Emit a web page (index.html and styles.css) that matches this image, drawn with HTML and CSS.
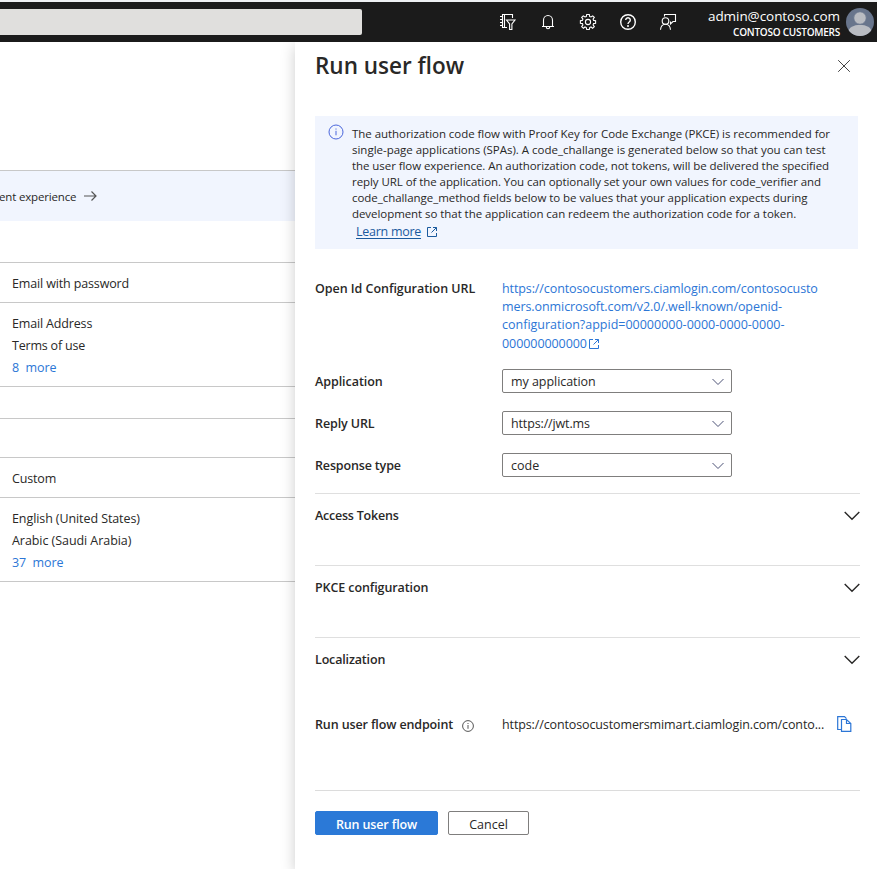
FILE: index.html
```html
<!DOCTYPE html>
<html lang="en">
<head>
<meta charset="utf-8">
<title>Run user flow</title>
<link rel="stylesheet" href="styles.css">
</head>
<body>
<header class="topbar">
  <div class="search"></div>
  <nav class="tools">
    <svg width="20" height="20" viewBox="0 0 20 20"><path d="M9 15.500H4.500V2.500H14.500V6M6.500 2.500V15.500M2 4.500H4M2 7.500H4M2 10.500H4M2 13.500H4M8.500 8H17L13.900 12V17.500H11.600V12Z"/></svg>
    <svg width="20" height="20" viewBox="0 0 20 20"><path d="M5.500 14.500V8.200A4.500 4.700 0 0 1 14.500 8.200V14.500M4 14.500H16M8.300 15A1.700 1.700 0 0 0 11.700 15"/></svg>
    <svg width="20" height="20" viewBox="0 0 20 20"><path d="M8.700 2.500H11.300L11.700 4.500L13 5L14.700 3.900L16.300 5.400L15.100 7.100L15.600 8.400L17.600 8.800V11.200L15.600 11.600L15.100 12.900L16.300 14.600L14.600 16.200L13 15L11.700 15.600L11.300 17.500H8.700L8.300 15.600L7 15L5.400 16.200L3.700 14.600L4.900 12.900L4.400 11.600L2.400 11.200V8.800L4.400 8.400L4.900 7.100L3.700 5.400L5.300 3.900L7 5L8.300 4.500Z"/><circle cx="10" cy="10" r="2.600"/></svg>
    <svg width="20" height="20" viewBox="0 0 20 20"><g class="bold"><circle cx="10" cy="10" r="7.300"/><path d="M7.700 8A2.300 2.300 0 1 1 11.200 10C10.300 10.600 10 11 10 12"/></g><circle class="dot" cx="10" cy="14" r="1"/></svg>
    <svg width="20" height="20" viewBox="0 0 20 20"><circle cx="7.500" cy="9" r="3.300"/><path d="M2.500 17.800C2.800 14.300 4.800 12.300 7.500 12.300S12.200 14.300 12.500 17.800M6.500 4.500V2.500H17.500V9.500H15L12.500 12V9.500"/></svg>
  </nav>
  <div class="account">
    <div class="mail"><span>admin@contoso.com</span></div>
    <div class="tenant"><span>CONTOSO CUSTOMERS</span></div>
  </div>
  <svg class="avatar" width="28" height="28" viewBox="0 0 28 28"><defs><clipPath id="disc"><circle cx="14" cy="14" r="14"/></clipPath></defs><g clip-path="url(#disc)"><rect width="28" height="28" fill="#68758c"/><ellipse cx="14" cy="23.500" rx="11.500" ry="6.800" fill="#b9bcc2"/><circle cx="14" cy="10" r="6.300" fill="#b9bcc2" stroke="#68758c"/></g></svg>
</header>
<main class="content">
  <section class="page">
    <div class="banner"><span class="t-banner">ent experience</span>
      <svg width="14" height="12" viewBox="0 0 14 12"><path d="M0 6H12M7.500 1.500L12 6L7.500 10.500"/></svg>
    </div>
    <div class="row spacer-a"></div>
    <div class="row single"><p><span class="t-ewp">Email with password</span></p></div>
    <div class="row list"><p><span class="t-ea">Email Address</span></p><p><span class="t-tou">Terms of use</span></p><p><a class="t-more">8&nbsp; more</a></p></div>
    <div class="row spacer-b"></div>
    <div class="row spacer-c"></div>
    <div class="row single"><p><span class="t-cus">Custom</span></p></div>
    <div class="row list"><p><span class="t-en">English (United States)</span></p><p><span class="t-ar">Arabic (Saudi Arabia)</span></p><p><a class="t-more">37&nbsp; more</a></p></div>
  </section>
  <aside class="panel">
    <div class="panel-head">
      <h1><span>Run user flow</span></h1>
      <svg class="close" width="14" height="14" viewBox="0 0 14 14"><path d="M1.200 1.200L12.800 12.800M12.800 1.200L1.200 12.800"/></svg>
    </div>
    <div class="info">
      <svg class="info-icon" width="16" height="16" viewBox="0 0 16 16"><circle cx="8" cy="8" r="7"/><path d="M8 6.800V11.300M8 4.500V5.600"/></svg>
      <div class="info-text">
        <div class="i1">The authorization code flow with Proof Key for Code Exchange (PKCE) is recommended for</div>
        <div class="i2">single-page applications (SPAs). A code_challange is generated below so that you can test</div>
        <div class="i3">the user flow experience. An authorization code, not tokens, will be delivered the specified</div>
        <div class="i4">reply URL of the application. You can optionally set your own values for code_verifier and</div>
        <div class="i5">code_challange_method fields below to be values that your application expects during</div>
        <div class="i6">development so that the application can redeem the authorization code for a token.</div>
        <div class="learn"><a>Learn more</a><svg class="ext" width="10" height="10" viewBox="0 0 10 10"><path d="M4 .5H.5V9.500H9.500V6M6 .5H9.500V4M9.500 .5L4.500 5.500"/></svg></div>
      </div>
    </div>
    <div class="field url">
      <label><span class="l1">Open Id Configuration URL</span></label>
      <div class="url-text">
        <div class="u1">https://contosocustomers.ciamlogin.com/contosocusto</div>
        <div class="u2">mers.onmicrosoft.com/v2.0/.well-known/openid-</div>
        <div class="u3">configuration?appid=00000000-0000-0000-0000-</div>
        <div class="u4"><span>000000000000</span><svg class="ext" width="10" height="10" viewBox="0 0 10 10"><path d="M4 .5H.5V9.500H9.500V6M6 .5H9.500V4M9.500 .5L4.500 5.500"/></svg></div>
      </div>
    </div>
    <div class="field"><label><span class="l2">Application</span></label><div class="select"><span class="s1">my application</span><svg width="12" height="8" viewBox="0 0 12 8"><path d="M.5 1L6 6.500L11.500 1"/></svg></div></div>
    <div class="field"><label><span class="l3">Reply URL</span></label><div class="select"><span class="s2">https://jwt.ms</span><svg width="12" height="8" viewBox="0 0 12 8"><path d="M.5 1L6 6.500L11.500 1"/></svg></div></div>
    <div class="field"><label><span class="l4">Response type</span></label><div class="select"><span class="s3">code</span><svg width="12" height="8" viewBox="0 0 12 8"><path d="M.5 1L6 6.500L11.500 1"/></svg></div></div>
    <div class="accordion">
      <div class="section"><span class="a1">Access Tokens</span><svg width="16" height="10" viewBox="0 0 16 10"><path d="M.7 1L8 8.300L15.300 1"/></svg></div>
      <div class="section"><span class="a2">PKCE configuration</span><svg width="16" height="10" viewBox="0 0 16 10"><path d="M.7 1L8 8.300L15.300 1"/></svg></div>
      <div class="section"><span class="a3">Localization</span><svg width="16" height="10" viewBox="0 0 16 10"><path d="M.7 1L8 8.300L15.300 1"/></svg></div>
    </div>
    <div class="endpoint">
      <label><span class="l5">Run user flow endpoint</span><svg class="hint" width="12" height="12" viewBox="0 0 12 12"><circle cx="6" cy="6" r="5.400"/><path d="M6 5V8.800M6 3V4"/></svg></label>
      <span class="ep">https://contosocustomersmimart.ciamlogin.com/conto...</span>
      <svg class="copy" width="15" height="16" viewBox="0 0 15 16"><path d="M4 13.500H.7V.7H7.500L9.500 2.700M4.500 3.500H9.500L13.800 7.500V15.400H4.500ZM9.500 3.500V7.500H13.800"/></svg>
    </div>
    <div class="actions">
      <button class="primary"><span>Run user flow</span></button>
      <button><span>Cancel</span></button>
    </div>
  </aside>
</main>
</body>
</html>
```
FILE: styles.css
```css
* { box-sizing: border-box; }
body {
  margin: 0;
  width: 877px;
  height: 869px;
  overflow: hidden;
  background: #fff;
  color: #292827;
  font: 12.5px/16px "Open Sans", "Noto Sans", sans-serif;
  white-space: nowrap;
}
p, h1 { margin: 0; }
svg { flex: none; fill: none; stroke: currentColor; }
a { color: #2c76d6; }

.topbar {
  height: 42px;
  border-top: 2px solid #eef0f3;
  background: #1b1b1b;
  color: #fff;
  display: flex;
  align-items: center;
}
.search { width: 362px; height: 26px; background: #e0dfdd; border-radius: 0 2px 2px 0; }
.tools { margin-left: 136px; display: flex; gap: 20px; }
.tools svg { stroke-width: 1.1; }
.tools .bold { stroke-width: 1.4; }
.tools .dot { fill: #fff; stroke: none; }
.account { margin-left: auto; margin-right: 6px; padding-top: 2px; text-align: right; }
.mail { font-size: 13.5px; line-height: 17px; letter-spacing: -.06px; }
.tenant { font-size: 10px; line-height: 14px; font-weight: 600; letter-spacing: -.24px; }
.avatar { margin-right: 3px; stroke: none; }

.content { display: grid; grid-template-columns: 295px 582px; height: 827px; }
.page { padding-top: 128px; overflow: hidden; }
.banner {
  height: 51px;
  border-top: 1px solid #c8c8c8;
  background: #f1f5fe;
  display: flex;
  align-items: center;
  gap: 8px;
  padding-top: 2px;
}
.banner svg { margin-top: -2px; color: #555; stroke-width: 1.2; }
.t-banner { font-size: 11.5px; letter-spacing: -.16px; margin-left: -1px; }
.row { border-bottom: 1px solid #c8c8c8; padding-left: 12px; }
.row p { line-height: 22px; }
.spacer-a { height: 42px; }
.spacer-b { height: 32px; }
.spacer-c { height: 39px; }
.single { height: 40px; padding-top: 10px; }
.list { height: 84px; padding-top: 10px; }
.t-ewp { letter-spacing: -.14px; }
.t-ea { letter-spacing: -.16px; }
.t-tou { letter-spacing: -.2px; }
.t-cus { letter-spacing: -.16px; }
.t-en { letter-spacing: -.09px; }
.t-ar { letter-spacing: -.06px; }
.t-more { letter-spacing: -.07px; }

.panel {
  position: relative;
  background: #fff;
  padding: 0 17px 0 20px;
  box-shadow: 0 4px 14px rgba(0, 0, 0, .2);
  clip-path: inset(0 0 0 -30px);
}
.panel-head { height: 74px; display: flex; justify-content: space-between; padding: 8px 9px 0 0; }
h1 { font-size: 22.5px; line-height: 32px; font-weight: 600; }
.close { margin-top: 9px; color: #444; }
.info { width: 543px; height: 133px; background: #f1f5fe; display: flex; padding: 10px 0 0 13px; }
.info-icon { color: #4a66dc; margin-top: -2px; }
.info-text { margin-left: 8px; font-size: 11.5px; }
.info-text > div { width: max-content; }
.i1 { letter-spacing: -.047px; }
.i2 { letter-spacing: -.012px; }
.i3, .i4 { letter-spacing: -.066px; }
.i5 { letter-spacing: -.05px; }
.i6 { letter-spacing: -.06px; }
.info-text .learn { display: flex; align-items: center; gap: 6px; padding-left: 4px; margin-top: 2px; font-size: 12.5px; color: #1a5a9e; letter-spacing: -.27px; }
.learn a { color: inherit; text-decoration: underline; text-underline-offset: 2px; }

.field { display: flex; margin-bottom: 18px; }
.field label { width: 187px; line-height: 26px; height: 24px; font-weight: 600; }
.url { margin: 31px 0 16px; }
.field.url label, .url-text { line-height: 18px; }
.url-text { color: #2c76d6; }
.url-text div { width: max-content; }
.l1 { letter-spacing: -.04px; }
.l2 { letter-spacing: -.05px; }
.l3 { letter-spacing: -.1px; }
.l4 { letter-spacing: -.15px; }
.l5 { letter-spacing: -.12px; }
.u1 { letter-spacing: -.1px; }
.u2 { letter-spacing: -.08px; }
.u4 { display: flex; align-items: center; gap: 2px; padding-top: 1px; letter-spacing: -.07px; }
.select {
  width: 230px;
  height: 24px;
  border: 1px solid #7f7e7d;
  border-radius: 2px;
  padding: 2px 7px 0 8px;
  display: flex;
  align-items: center;
  justify-content: space-between;
}
.select svg { color: #4d5276; }
.s1 { letter-spacing: -.05px; }
.s2 { letter-spacing: -.14px; }
.accordion { margin-top: -2px; }
.section {
  height: 72px;
  border-top: 1px solid #dfdfdf;
  display: flex;
  justify-content: space-between;
  padding-top: 14px;
  font-weight: 600;
}
.section svg { margin-top: 3px; stroke-width: 1.4; }
.a1 { letter-spacing: -.22px; }
.a2 { letter-spacing: -.1px; }
.a3 { letter-spacing: -.16px; }
.endpoint { height: 82px; border-bottom: 1px solid #dcdcdc; display: flex; padding-top: 8px; }
.endpoint label { width: 187px; display: flex; font-weight: 600; }
.hint { margin: 3px 0 0 9px; color: #555; }
.ep { width: 335px; letter-spacing: -.12px; }
.copy { margin-top: -1px; color: #2c76d6; stroke-width: 1.2; }
.actions { display: flex; gap: 10px; margin-top: 20px; }
button {
  width: 81px;
  height: 24px;
  border: 1px solid #7f7e7d;
  border-radius: 2px;
  padding: 3px 0 0;
  background: #fff;
  color: inherit;
  font: inherit;
  font-weight: 400;
}
.primary { width: 123px; background: #2b79d7; border-color: #2b79d7; color: #fff; font-weight: 600; letter-spacing: -.13px; }
```
